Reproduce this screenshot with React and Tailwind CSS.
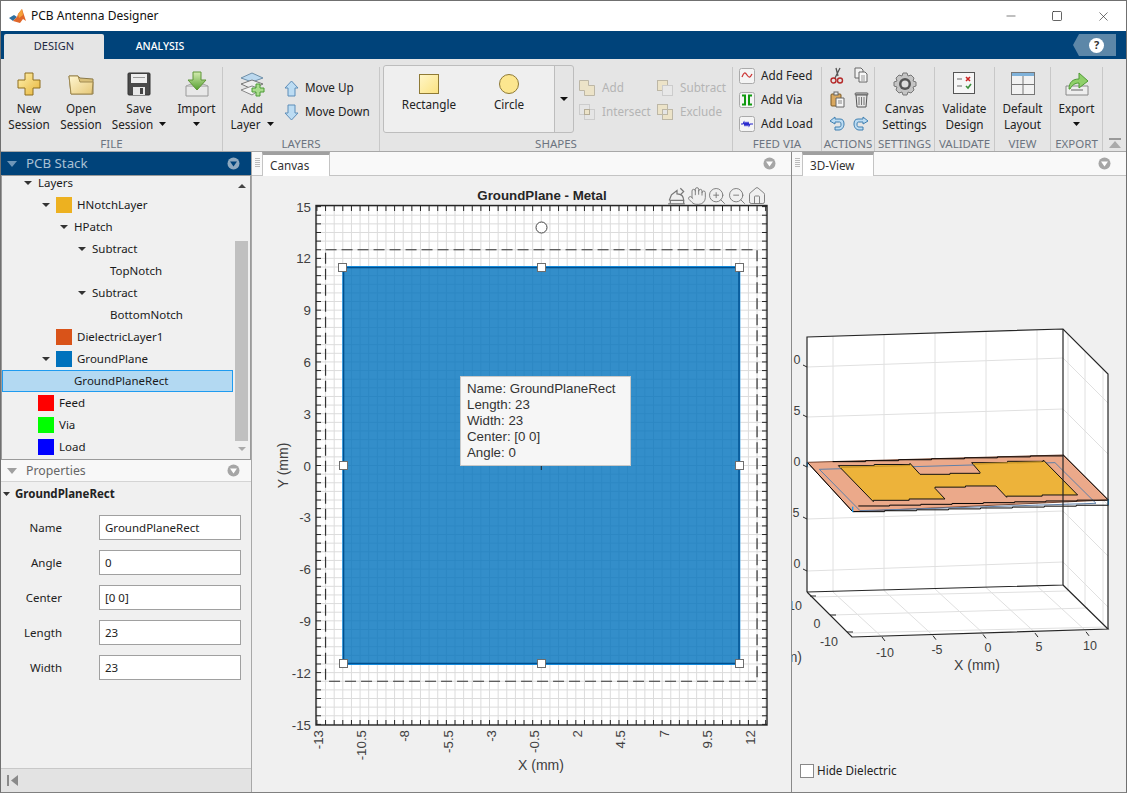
import React from "react";
import { Hand, ZoomIn, ZoomOut, Home, Minus, Square, X } from "lucide-react";

const Tri = ({ c = "#333", w = 9, h = 5, up = false }) => (
  <svg width={w} height={h} viewBox="0 0 10 6" preserveAspectRatio="none" className="block shrink-0">
    <polygon points={up ? "0,6 10,6 5,0" : "0,0 10,0 5,6"} fill={c} />
  </svg>
);

const Ico = ({ s = 32, w, h, vb, children }) => (
  <svg width={w || s} height={h || s} viewBox={vb || `0 0 ${w || s} ${h || s}`} className="block shrink-0">{children}</svg>
);

const NewIcon = () => (
  <Ico s={26}>
    <defs><linearGradient id="g1" x1="0" y1="0" x2="1" y2="1"><stop offset="0" stopColor="#fff2b0" /><stop offset="1" stopColor="#e8b53a" /></linearGradient></defs>
    <path d="M9 2h8v7h7v8h-7v7H9v-7H2V9h7z" fill="url(#g1)" stroke="#8f6f1f" />
  </Ico>
);
const OpenIcon = () => (
  <Ico w={26} h={22}>
    <defs><linearGradient id="g2" x1="0" y1="0" x2="1" y2="1"><stop offset="0" stopColor="#fff6d0" /><stop offset="1" stopColor="#e6c878" /></linearGradient></defs>
    <path d="M1 3h9l2 2 13 1v15H3z" fill="#d9c07a" stroke="#8b7a4a" />
    <path d="M1 3l2 18h21l1-12H12l-2-6z" fill="url(#g2)" stroke="#a08a50" />
  </Ico>
);
const SaveIcon = () => (
  <Ico s={24}>
    <rect x="1" y="1" width="22" height="22" rx="1" fill="#4a4a4a" stroke="#333" />
    <rect x="4" y="2" width="16" height="9" fill="#eee" />
    <rect x="6" y="5" width="12" height="1" fill="#999" />
    <rect x="6" y="15" width="12" height="8" fill="#e8e8e8" />
    <rect x="13" y="16" width="3" height="6" fill="#444" />
  </Ico>
);
const ImportIcon = () => (
  <Ico w={24} h={26}>
    <defs><linearGradient id="g3" x1="0" y1="0" x2="0" y2="1"><stop offset="0" stopColor="#d5ecb0" /><stop offset="1" stopColor="#55a030" /></linearGradient></defs>
    <path d="M1 15h22v10H1z" fill="#e8e8e8" stroke="#999" />
    <path d="M1 15l5-2h12l5 2" fill="#ccc" stroke="#aaa" />
    <path d="M8 1h8v8h5L12 19 3 9h5z" fill="url(#g3)" stroke="#5f9638" />
  </Ico>
);
const AddLayerIcon = () => (
  <Ico w={26} h={26}>
    <path d="M2 7l11-5 11 5-11 4z" fill="#bcd9ef" stroke="#6f8fa8" />
    <path d="M2 13l11-4 11 4-11 5z" fill="#eee" stroke="#777" />
    <path d="M2 19l11-4 9 3-9 6z" fill="#f4f4f4" stroke="#888" />
    <path d="M17 13h4v4h4v4h-4v4h-4v-4h-4v-4h4z" fill="#a9dc8d" stroke="#4b9a35" />
  </Ico>
);
const Arrow = ({ up }) => (
  <Ico w={15} h={17}>
    <path d={up ? "M7.5 1L14 8h-3v8H4V8H1z" : "M7.5 16L14 9h-3V1H4v8H1z"} fill="#bcdcf3" stroke="#5d8db8" />
  </Ico>
);
const RectIcon = () => (
  <Ico s={20}>
    <defs><linearGradient id="g4" x1="0" y1="0" x2="1" y2="1"><stop offset="0" stopColor="#fff6c8" /><stop offset="1" stopColor="#fbe280" /></linearGradient></defs>
    <rect x=".5" y=".5" width="19" height="19" fill="url(#g4)" stroke="#8f7a35" />
  </Ico>
);
const CircleIcon = () => (
  <Ico s={20}>
    <circle cx="10" cy="10" r="9.5" fill="#fce68f" stroke="#8f7a35" />
  </Ico>
);
const BoolIcon = ({ kind }) => (
  <Ico s={17}>
    {kind === "add" && <path d="M.5.5h9v5h6v10h-10v-5h-5z" fill="#ece3c8" stroke="#bdb7a6" />}
    {kind === "sub" && <><rect x=".5" y=".5" width="10" height="10" fill="#ece3c8" stroke="#bdb7a6" /><rect x="5.5" y="5.5" width="10" height="10" fill="#e8e8e8" stroke="#ccc" /></>}
    {kind === "int" && <><rect x=".5" y=".5" width="10" height="10" fill="none" stroke="#ccc" /><rect x="5.5" y="5.5" width="10" height="10" fill="none" stroke="#ccc" /><rect x="5.5" y="5.5" width="5" height="5" fill="#ece3c8" stroke="#b5ad98" /></>}
    {kind === "exc" && <><rect x=".5" y=".5" width="10" height="10" fill="#ece3c8" stroke="#bdb7a6" /><rect x="5.5" y="5.5" width="10" height="10" fill="#ece3c8" stroke="#bdb7a6" /><rect x="5.5" y="5.5" width="5" height="5" fill="#e5e5e5" stroke="#bdb7a6" /></>}
  </Ico>
);
const FeedBox = ({ children }) => (
  <Ico s={16}>
    <rect x=".5" y=".5" width="15" height="15" rx="2" fill="#f4f4f4" stroke="#aaa" />
    {children}
  </Ico>
);
const Cut = () => (
  <Ico w={14} h={17}>
    <path d="M10 1L5 11M6 1l2 8" stroke="#555" strokeWidth="1.3" fill="none" />
    <circle cx="3.5" cy="13.5" r="2.5" fill="none" stroke="#b52a2a" strokeWidth="1.4" />
    <circle cx="10" cy="13.5" r="2.5" fill="none" stroke="#b52a2a" strokeWidth="1.4" />
  </Ico>
);
const Copy = () => (
  <Ico w={14} h={16}>
    <path d="M1 1h6l2 2v8H1z" fill="#f2f2f2" stroke="#666" />
    <path d="M5 5h6l2 2v8H5z" fill="#f8f8f8" stroke="#666" />
    <path d="M7 9h4M7 11h4M7 13h4" stroke="#999" />
  </Ico>
);
const Paste = () => (
  <Ico w={15} h={17}>
    <rect x="1" y="3" width="10" height="12" rx="1" fill="#d9a860" stroke="#7c5a25" />
    <rect x="4" y="1" width="4" height="3" fill="#eee" stroke="#666" />
    <path d="M6 7h8v9H6z" fill="#f6f6f6" stroke="#666" />
    <path d="M8 10h4M8 12h4" stroke="#888" />
  </Ico>
);
const Trash = () => (
  <Ico w={15} h={17}>
    <rect x="1" y="2" width="13" height="2" rx="1" fill="#ddd" stroke="#555" />
    <path d="M2 4l1 12h9l1-12z" fill="#e6e6e6" stroke="#555" />
    <path d="M5 6v8M7.5 6v8M10 6v8" stroke="#777" />
  </Ico>
);
const Undo = ({ flip }) => (
  <Ico w={16} h={15}>
    <g transform={flip ? "translate(16 0) scale(-1 1)" : undefined}>
      <path d="M1 5l5-4v2h5c3 0 4 2 4 5s-2 6-5 6H6v-3h4c2 0 2-1 2-3s-1-2-2-2H6v2z" fill="#bcdcf3" stroke="#3f7fb0" />
    </g>
  </Ico>
);
const Gear = () => (
  <Ico s={24}>
    <path d="M10 1h4l1 3 3-1 3 3-1 3 3 1v4l-3 1 1 3-3 3-3-1-1 3h-4l-1-3-3 1-3-3 1-3-3-1v-4l3-1-1-3 3-3 3 1z" fill="#c4c4c4" stroke="#777" />
    <circle cx="12" cy="12" r="6" fill="#555" />
    <circle cx="12" cy="12" r="3.5" fill="#ddd" />
  </Ico>
);
const ValidateIcon = () => (
  <Ico s={23}>
    <rect x=".5" y=".5" width="21" height="21" fill="#f6f6f6" stroke="#555" />
    <path d="M4 7h5M4 14h5" stroke="#999" strokeWidth="1.5" />
    <path d="M13 5l4 4M17 5l-4 4" stroke="#cc2222" strokeWidth="1.6" />
    <path d="M13 14l2 2 3-4" stroke="#3c8f3c" strokeWidth="1.6" fill="none" />
  </Ico>
);
const LayoutIcon = () => (
  <Ico s={24}>
    <rect x=".5" y=".5" width="23" height="22" fill="#f2f2f2" stroke="#777" />
    <rect x="1" y="1" width="22" height="3" fill="#7fb2da" />
    <path d="M1 12.5h22M12 4v18" stroke="#777" />
  </Ico>
);
const ExportIcon = () => (
  <Ico w={24} h={24}>
    <path d="M1 14h22v9H1z" fill="#eee" stroke="#888" />
    <path d="M6 18h12" stroke="#aaa" strokeWidth="2" />
    <path d="M4 17c0-7 4-10 10-10V1l9 8-9 7v-5c-4 0-7 2-9 6z" fill="#8fd06a" stroke="#4f9a35" />
  </Ico>
);

const TwoLine = ({ a, b, drop }) => (
  <div className="flex flex-col items-center text-[11.7px] leading-[16px] text-[#222] whitespace-nowrap">
    <span>{a}</span>
    <span className="flex items-center gap-[6px] h-[16px]">
      {b}
      {drop && <Tri c="#111" w={7} h={4} />}
    </span>
  </div>
);

const Big = ({ w, icon, a, b, drop }) => (
  <div className="flex flex-col items-center shrink-0" style={{ width: w }}>
    <div className="h-[33px] flex items-center justify-center">{icon}</div>
    <TwoLine a={a} b={b} drop={drop} />
  </div>
);

const Section = ({ w, label, children, noBorder }) => (
  <div className={`flex flex-col shrink-0 h-full ${noBorder ? "" : "border-r border-[#c8c8c8]"}`} style={{ width: w }}>
    <div className="h-[69px] flex shrink-0">{children}</div>
    <div className="h-[15px] shrink-0 text-center text-[11.5px] leading-[15px] text-[#6c7480] whitespace-nowrap overflow-hidden">{label}</div>
  </div>
);

const Small = ({ icon, label, disabled, gap = "gap-[6px]" }) => (
  <div className={`flex items-center ${gap} h-[24px] text-[11.7px] whitespace-nowrap ${disabled ? "text-[#b4b4b4]" : "text-[#222]"}`}>
    {icon}
    <span>{label}</span>
  </div>
);

const Toolstrip = () => (
  <div className="h-[93px] shrink-0 bg-[#e5e5e5] flex pt-[8px] border-b border-[#a8a8a8]">
    <div className="flex h-[84px]">
      <Section w={222} label="FILE">
        <div className="w-[3px]" />
        <Big w={52} icon={<NewIcon />} a="New" b="Session" />
        <Big w={52} icon={<OpenIcon />} a="Open" b="Session" />
        <Big w={64} icon={<SaveIcon />} a="Save" b="Session" drop />
        <Big w={51} icon={<ImportIcon />} a="Import" b="" drop />
      </Section>
      <Section w={157} label="LAYERS">
        <Big w={58} icon={<AddLayerIcon />} a="Add" b="Layer" drop />
        <div className="flex flex-col pt-[9px] pl-[3px]">
          <Small icon={<Arrow up />} label="Move Up" />
          <Small icon={<Arrow />} label="Move Down" />
        </div>
      </Section>
      <Section w={353} label="SHAPES">
        <div className="ml-[3px] w-[191px] h-[68px] -mt-[2px] border border-[#bdbdbd] rounded-[3px] flex shrink-0">
          <div className="w-[171px] bg-[#efefef] border-r border-[#bdbdbd] flex pt-[8px] rounded-l-[3px]">
            <div className="w-[90px] flex flex-col items-center gap-[2px] text-[11.7px] text-[#222]">
              <RectIcon />
              <span>Rectangle</span>
            </div>
            <div className="w-[70px] flex flex-col items-center gap-[2px] text-[11.7px] text-[#222]">
              <CircleIcon />
              <span>Circle</span>
            </div>
          </div>
          <div className="flex-1 flex items-center justify-center"><Tri c="#111" w={8} h={4} /></div>
        </div>
        <div className="flex flex-col pt-[9px] pl-[5px] w-[83px] shrink-0">
          <Small icon={<BoolIcon kind="add" />} label="Add" disabled />
          <Small icon={<BoolIcon kind="int" />} label="Intersect" disabled />
        </div>
        <div className="flex flex-col pt-[9px]">
          <Small icon={<BoolIcon kind="sub" />} label="Subtract" disabled />
          <Small icon={<BoolIcon kind="exc" />} label="Exclude" disabled />
        </div>
      </Section>
      <Section w={89} label="FEED VIA">
        <div className="flex flex-col pl-[6px] -mt-[3px]">
          <Small icon={<FeedBox><path d="M3 9c2-5 3-5 5-2s3 3 5-1" stroke="#cc3333" fill="none" strokeWidth="1.3" /></FeedBox>} label="Add Feed" />
          <Small icon={<FeedBox><path d="M3 3.5h3v9H3M13 3.5h-3v9h3" stroke="#109a10" fill="none" strokeWidth="2" /></FeedBox>} label="Add Via" />
          <Small icon={<FeedBox><path d="M2 8h2l1-2 1 4 1-4 1 4 1-4 1 4 1-2h3" stroke="#2222cc" fill="none" strokeWidth="1.1" /></FeedBox>} label="Add Load" />
        </div>
      </Section>
      <Section w={53} label="ACTIONS">
        <div className="grid grid-cols-[24px_24px] auto-rows-[24px] pl-[3px] -mt-[4px] items-center justify-items-center">
          <Cut /><Copy /><Paste /><Trash /><Undo /><Undo flip />
        </div>
      </Section>
      <Section w={60} label="SETTINGS">
        <Big w={59} icon={<Gear />} a="Canvas" b="Settings" />
      </Section>
      <Section w={60} label="VALIDATE">
        <Big w={59} icon={<ValidateIcon />} a="Validate" b="Design" />
      </Section>
      <Section w={56} label="VIEW">
        <Big w={55} icon={<LayoutIcon />} a="Default" b="Layout" />
      </Section>
      <Section w={52} label="EXPORT">
        <Big w={51} icon={<ExportIcon />} a="Export" b="" drop />
      </Section>
    </div>
    <div className="flex-1 flex items-end justify-center pb-[2px]">
      <svg width="12" height="11" viewBox="0 0 12 11" className="block">
        <rect x="0" y="0" width="12" height="2" fill="#999" />
        <polygon points="6,3 12,10 0,10" fill="#aaa" />
      </svg>
    </div>
  </div>
);

const Grip = () => (
  <div className="w-[10px] flex flex-col gap-[1px] items-center pt-[6px] shrink-0">
    {[0, 1, 2, 3, 4].map((i) => <div key={i} className="w-[5px] h-[1px] bg-[#bbb]" />)}
  </div>
);

const Menu = ({ c = "#a6a6a6", t = "#fff" }) => (
  <svg width="13" height="13" viewBox="0 0 13 13" className="block shrink-0">
    <circle cx="6.5" cy="6.5" r="6" fill={c} />
    <polygon points="3,4.5 10,4.5 6.5,9.5" fill={t} />
  </svg>
);

const rows = [
  { d: 0, a: 1, t: "Layers" },
  { d: 1, a: 1, s: "#edb120", t: "HNotchLayer" },
  { d: 2, a: 1, t: "HPatch" },
  { d: 3, a: 1, t: "Subtract" },
  { d: 4, t: "TopNotch" },
  { d: 3, a: 1, t: "Subtract" },
  { d: 4, t: "BottomNotch" },
  { d: 1, s: "#d95319", t: "DielectricLayer1" },
  { d: 1, a: 1, s: "#0072bd", t: "GroundPlane" },
  { d: 2, t: "GroundPlaneRect", sel: 1 },
  { d: 0, s: "#ff0000", t: "Feed" },
  { d: 0, s: "#00ff00", t: "Via" },
  { d: 0, s: "#0000ff", t: "Load" },
];

const Tree = () => (
  <div className="h-[285px] shrink-0 border border-[#9a9a9a] bg-[#f0f0f0] flex overflow-hidden">
    <div className="w-[232px] -mt-[4px] shrink-0">
      {rows.map((r, i) => (
        <div
          key={i}
          className={`h-[22px] flex items-center whitespace-nowrap text-[11.5px] text-[#1a1a1a] ${r.sel ? "bg-[#b3d9f2] border border-[#1e9bf0] w-[231px]" : ""}`}
          style={{ paddingLeft: (r.sel ? 17 : 18) + 18 * r.d }}
        >
          <div className="w-[18px] flex justify-center shrink-0 pr-[2px]">{r.a ? <Tri c="#333" w={8} h={4} /> : null}</div>
          {r.s && <div className="w-[16px] h-[16px] mr-[5px] shrink-0" style={{ background: r.s }} />}
          <span>{r.t}</span>
        </div>
      ))}
    </div>
    <div className="w-[13px] ml-[1px] flex flex-col items-center shrink-0">
      <div className="mt-[8px]"><Tri c="#444" w={8} h={4} up /></div>
      <div className="w-[13px] h-[200px] bg-[#c0c0c0] mt-[53px]" />
      <div className="mt-[6px]"><Tri c="#aaa" w={8} h={4} /></div>
    </div>
  </div>
);

const props = [["Name", "GroundPlaneRect"], ["Angle", "0"], ["Center", "[0 0]"], ["Length", "23"], ["Width", "23"]];

const LeftPanel = () => (
  <div className="w-[251px] shrink-0 flex flex-col border-r border-[#a8a8a8] font-['Noto_Sans',sans-serif]">
    <div className="h-[23px] bg-[#00437a] flex items-center pl-[6px] pr-[11px] shrink-0">
      <Tri c="#6e96b8" w={10} h={6} />
      <span className="ml-[9px] text-[13.3px] text-[#a9c0d4] flex-1">PCB Stack</span>
      <Menu c="#8fa9bf" t="#00437a" />
    </div>
    <Tree />
    <div className="h-[22px] bg-[#f8f8f8] flex items-center pl-[6px] pr-[11px] border-b border-[#d4d4d4] shrink-0">
      <Tri c="#a0a0a0" w={10} h={6} />
      <span className="ml-[9px] pt-[2px] text-[12.3px] text-[#666] flex-1">Properties</span>
      <Menu />
    </div>
    <div className="flex-1 bg-[#f0f0f0] flex flex-col min-h-0">
      <div className="h-[23px] flex items-center pl-[2px] text-[11.5px] font-bold text-[#222]">
        <Tri c="#333" w={7} h={4} />
        <span className="ml-[5px]">GroundPlaneRect</span>
      </div>
      <div className="flex flex-col gap-[10px] pt-[10px]">
        {props.map(([l, v]) => (
          <div key={l} className="flex items-center h-[25px]">
            <div className="w-[61px] text-right text-[11.5px] text-[#222]">{l}</div>
            <div className="ml-[37px] w-[142px] h-[25px] bg-white border border-[#a0a0a0] flex items-center pl-[5px] text-[11.5px] text-[#222]">{v}</div>
          </div>
        ))}
      </div>
      <div className="flex-1" />
      <div className="h-[24px] bg-[#e3e3e3] border-t border-[#c8c8c8] flex items-center pl-[6px]">
        <svg width="11" height="11" viewBox="0 0 11 11" className="block">
          <rect x="0" y="0" width="2" height="11" fill="#8a8a8a" />
          <polygon points="11,0 11,11 4,5.5" fill="#8a8a8a" />
        </svg>
      </div>
    </div>
  </div>
);

const TabHead = ({ w, label, pr }) => (
  <div className="h-[24px] bg-[#f9f9f9] border-b border-[#c4c4c4] flex items-stretch shrink-0 font-['Noto_Sans',sans-serif]" style={{ paddingRight: pr }}>
    <Grip />
    <div className="bg-white border-x border-[#c4c4c4] border-t-[3px] border-t-[#a0a0a0] -mb-[1px] flex items-center pl-[7px] text-[11.7px] text-[#333]" style={{ width: w }}>{label}</div>
    <div className="flex-1 flex items-center justify-end"><Menu /></div>
  </div>
);

const X0 = 541.3, Y0 = 465.5, K = 17.26;
const px = (v) => X0 + v * K;
const py = (v) => Y0 - v * K;
const half = Array.from({ length: 53 }, (_, i) => -13 + i * 0.5);
const halfY = Array.from({ length: 61 }, (_, i) => -15 + i * 0.5);
const xLabels = ["-13", "-10.5", "-8", "-5.5", "-3", "-0.5", "2", "4.5", "7", "9.5", "12"];
const yLabels = ["15", "12", "9", "6", "3", "0", "-3", "-6", "-9", "-12", "-15"];

const Handle = ({ x, y }) => <rect x={x - 4} y={y - 4} width="8" height="8" fill="#fff" stroke="#6e6e6e" />;

const Plot = () => (
  <svg width="539" height="617" viewBox="252 176 539 617" className="block" fontFamily="'Liberation Sans',Arial,sans-serif">
    <rect x="316" y="206" width="451" height="519" fill="#fff" />
    {half.map((v) => <line key={v} x1={px(v)} x2={px(v)} y1="206" y2="725" stroke="#dcdcdc" />)}
    {halfY.map((v) => <line key={v} y1={py(v)} y2={py(v)} x1="316" x2="767" stroke="#dcdcdc" />)}
    <rect x={px(-11.5)} y={py(11.5)} width={K * 23} height={K * 23} fill="#0072bd" fillOpacity=".8" />
    <rect x={px(-11.5)} y={py(11.5) - 0.5} width={K * 23} height={K * 23 + 1} fill="none" stroke="#1b9cf2" strokeWidth="1" />
    <rect x={px(-11.5) + 0.75} y={py(11.5) + 0.5} width={K * 23 - 1.5} height={K * 23 - 1} fill="none" stroke="#00508f" strokeWidth="1.5" />
    <rect x={px(-12.5)} y={py(12.5)} width={K * 25} height={K * 25} fill="none" stroke="#333" strokeWidth="1.2" strokeDasharray="11 5" />
    {half.map((v) => (
      <g key={v} stroke="#262626">
        <line x1={px(v)} x2={px(v)} y1="206" y2="211" />
        <line x1={px(v)} x2={px(v)} y1="725" y2="720" />
      </g>
    ))}
    {halfY.map((v) => (
      <g key={v} stroke="#262626">
        <line y1={py(v)} y2={py(v)} x1="316" x2="321" />
        <line y1={py(v)} y2={py(v)} x1="767" x2="762" />
      </g>
    ))}
    <rect x="316" y="205.5" width="451" height="519.5" fill="none" stroke="#262626" strokeWidth="1.4" />
    {yLabels.map((l, i) => (
      <text key={l} x="311" y={211.5 + i * 51.8} textAnchor="end" fontSize="13.3" fill="#404040">{l}</text>
    ))}
    {xLabels.map((l, i) => (
      <text key={l} transform={`translate(${323 + i * 43.2} 730) rotate(-90)`} textAnchor="end" fontSize="13.3" fill="#404040">{l}</text>
    ))}
    <text x="541" y="770" textAnchor="middle" fontSize="14" fill="#404040">X (mm)</text>
    <text transform="translate(288 465.5) rotate(-90)" textAnchor="middle" fontSize="14" fill="#404040">Y (mm)</text>
    <text x="542" y="200" textAnchor="middle" fontSize="13.3" fontWeight="700" fill="#262626">GroundPlane - Metal</text>
    <line x1={px(0)} x2={px(0)} y1="462" y2="470" stroke="#222" />
    <circle cx="541.5" cy="227.5" r="5.5" fill="#fff" stroke="#444" />
    {[[342.5, 267.5], [541.5, 267.5], [739.5, 267.5], [343.5, 465.5], [739.5, 465.5], [343.5, 663.5], [541.5, 663.5], [739.5, 663.5]].map(([x, y], i) => <Handle key={i} x={x} y={y} />)}
  </svg>
);

// The model's near-horizontal edges render as staircases in the reference.
const stair = (pts, closed) => {
  const out = [];
  const list = closed ? [...pts, pts[0]] : pts;
  for (let i = 0; i < list.length - 1; i++) {
    const [x0, y0] = list[i], [x1, y1] = list[i + 1];
    out.push([x0, y0]);
    const dx = x1 - x0, dy = y1 - y0;
    if (Math.abs(dx) > 3 * Math.abs(dy) && Math.abs(dx) > 120) {
      const n = Math.round(Math.abs(dx) / 98);
      for (let k = 1; k < n; k++) {
        const x = x0 + (dx * k) / n;
        out.push([x, y0 + (dy * (k - 1)) / n], [x, y0 + (dy * k) / n]);
      }
      out.push([x1, y0 + (dy * (n - 1)) / n]);
    }
  }
  if (!closed) out.push(list[list.length - 1]);
  return out.map((p) => p.join(",")).join(" ");
};

const P3 = ({ pts, ...r }) => <polyline points={pts} fill="none" {...r} />;

const View3D = () => (
  <svg width="335" height="400" viewBox="792 300 335 400" className="block shrink-0" fontFamily="'Liberation Sans',Arial,sans-serif">
    <polygon points="807,337 1063,329 1108,374 1108,629 852,637 807,592" fill="#fff" />
    <g stroke="#e0e0e0" strokeWidth="1">
      {[833, 884, 935, 986, 1037].map((x, i) => (
        <g key={x}>
          <line x1={x} x2={x} y1={336 - i * 1.5} y2={592 - i * 1.5} />
          <line x1={x} y1={592 - i * 1.5} x2={x + 49} y2={637 - i * 1.5} />
        </g>
      ))}
      <line x1="1068" x2="1068" y1="334" y2="590" />
      <line x1="1085" x2="1085" y1="351" y2="607" />
      <line x1="1103" x2="1103" y1="369" y2="625" />
      {[[367, 358], [417, 409], [467, 460], [519, 511], [571, 562]].map(([a, b]) => (
        <g key={a}>
          <line x1="807" y1={a} x2="1063" y2={b} />
          <line x1="1063" y1={b} x2="1108" y2={b + 45} />
        </g>
      ))}
      <line x1="813" y1="597" x2="1068" y2="591" />
      <line x1="832" y1="615" x2="1088" y2="608" />
      <line x1="850" y1="633" x2="1106" y2="627" />
    </g>
    <g transform="translate(790 320) scale(.3333)">
      <polygon points="52,427 820,405 955,540 188,575" fill="#eba98a" />
      <polygon points="52,427 820,405 955,540 188,575" fill="none" stroke="#5b2a16" strokeWidth="2.5" />
      <polygon points="88,448 795,428 918,550 210,572" fill="none" stroke="#5f7fa8" strokeWidth="3" />
      <polygon
        points={stair([[145, 437], [360, 430], [390, 463], [570, 457], [545, 428], [760, 420], [863, 525], [650, 532], [618, 498], [435, 505], [465, 537], [250, 545]], true)}
        fill="#edb33a"
        stroke="#111"
        strokeWidth="3"
      />
      <P3 pts="150,442 360,436" stroke="#c8962a" strokeWidth="4" />
      <P3 pts="550,432 755,426" stroke="#c8962a" strokeWidth="4" />
      <P3 pts={stair([[128, 425], [820, 405]])} stroke="#000" strokeWidth="3" />
      <P3 pts="52,427 188,575" stroke="#000" strokeWidth="3" />
      <P3 pts="820,405 955,540" stroke="#000" strokeWidth="3" />
      <P3 pts={stair([[188, 575], [955, 553]])} stroke="#000" strokeWidth="3" />
      <P3 pts={stair([[205, 558], [955, 538]])} stroke="#000" strokeWidth="3" />
      <P3 pts="188,560 188,576" stroke="#1b9cf2" strokeWidth="4" />
      <P3 pts="955,538 955,555" stroke="#1b9cf2" strokeWidth="4" />
      <P3 pts="52,427 52,440" stroke="#1b9cf2" strokeWidth="4" />
    </g>
    <g stroke="#262626" fill="none" strokeWidth="1.2">
      <polyline points="807,592 807,337 1063,329 1108,374 1108,629" />
      <polyline points="1063,329 1063,585 807,592" />
      <polyline points="1063,585 1108,629 852,637 807,592" />
    </g>
    <g stroke="#262626" strokeWidth="1">
      {[367, 417, 467, 519, 571].map((y) => <line key={y} x1="803" y1={y - 2} x2="807" y2={y} />)}
      {[[810, 596], [830, 615], [847, 632]].map(([x, y]) => <line key={x} x1={x} y1={y} x2={x + 6} y2={y} />)}
      {[882, 933, 983, 1035, 1086].map((x, i) => <line key={x} x1={x} y1={637 - i * 1.3} x2={x + 3} y2={641 - i * 1.3} />)}
    </g>
    <g fontSize="12.5" fill="#404040" textAnchor="middle">
      <text x="797" y="364">0</text>
      <text x="797" y="415">5</text>
      <text x="797" y="466">0</text>
      <text x="796" y="517">5</text>
      <text x="797" y="568">0</text>
      <text x="795" y="610">10</text>
      <text x="817" y="628">0</text>
      <text x="829" y="646">-10</text>
      <text x="885" y="657">-10</text>
      <text x="937" y="654">-5</text>
      <text x="988" y="652">0</text>
      <text x="1039" y="651">5</text>
      <text x="1090" y="650">10</text>
      <text x="977" y="670" fontSize="14">X (mm)</text>
      <text x="802" y="662" fontSize="14" textAnchor="end">Y (mm)</text>
    </g>
  </svg>
);

const IconEdit = () => (
  <svg width="20" height="20" viewBox="0 0 18 18" className="block" fill="none" stroke="#777" strokeWidth="1.1">
    <path d="M1 16h15M2 13l2-5 5-4v3c4 0 6 2 6 6M12 2l3 3-3 3" />
    <path d="M3 16v-3h12v3" />
  </svg>
);

export default function App() {
  return (
    <div className="w-[1127px] h-[793px] flex flex-col overflow-hidden bg-[#f0f0f0] border-x border-t border-[#707070] border-b border-b-[#808080] font-['Noto_Sans',sans-serif]">
      <div className="h-[30px] bg-white flex items-center pl-[8px] shrink-0">
        <svg width="17" height="15" viewBox="0 0 17 15" className="block">
          <polygon points="0,9 5,6 8,8 4,12" fill="#2f6f9f" />
          <polygon points="4,12 8,8 9,5 13,0 17,12 14,10 11,14" fill="#e0672a" />
          <polygon points="9,5 13,0 14,6 10,9" fill="#f5a13a" />
        </svg>
        <span className="ml-[5px] text-[12px] text-[#111]">PCB Antenna Designer</span>
        <div className="flex-1" />
        <div className="flex items-center text-[#222]">
          <div className="w-[46px] flex justify-center"><Minus size={14} strokeWidth={1} /></div>
          <div className="w-[46px] flex justify-center"><Square size={12} strokeWidth={1.4} /></div>
          <div className="w-[46px] flex justify-center"><X size={15} strokeWidth={1} /></div>
        </div>
      </div>
      <div className="h-[28px] bg-[#00437a] flex items-end pl-[3px] shrink-0">
        <div className="w-[100px] h-[25px] bg-[#e5e5e5] rounded-t-[2px] flex items-center justify-center text-[11px] text-[#1d2a44]">DESIGN</div>
        <div className="w-[112px] h-[25px] flex items-center justify-center text-[10.5px] text-white font-medium">ANALYSIS</div>
        <div className="flex-1" />
        <div className="w-[43px] h-[22px] mb-[3px] mr-[10px] bg-[#5d87a8] flex items-center justify-center [clip-path:polygon(14%_0,100%_0,100%_100%,14%_100%,0_50%)]">
          <div className="ml-[4px] w-[15px] h-[15px] rounded-full bg-white text-[#333] text-[11px] font-bold flex items-center justify-center">?</div>
        </div>
      </div>
      <Toolstrip />
      <div className="flex-1 flex min-h-0">
        <LeftPanel />
        <div className="w-[540px] shrink-0 flex flex-col border-r border-[#8a8a8a] relative min-h-0">
          <TabHead w={68} label="Canvas" pr={15} />
          <div className="flex-1 min-h-0 overflow-hidden"><Plot /></div>
          <div className="absolute left-[415px] top-[34px] flex items-center text-[#777]">
            <IconEdit />
            <Hand size={20} strokeWidth={1.1} />
            <ZoomIn size={20} strokeWidth={1.1} />
            <ZoomOut size={20} strokeWidth={1.1} />
            <Home size={20} strokeWidth={1.1} />
          </div>
          <div className="absolute left-[208px] top-[224px] w-[171px] h-[90px] bg-[#f6f6f6] border border-[#c8c8c8] px-[6px] py-[4px] text-[13.3px] leading-[16px] text-[#333] font-['Liberation_Sans',Arial,sans-serif] whitespace-nowrap">
            <div>Name: GroundPlaneRect</div>
            <div>Length: 23</div>
            <div>Width: 23</div>
            <div>Center: [0 0]</div>
            <div>Angle: 0</div>
          </div>
        </div>
        <div className="flex-1 flex flex-col min-h-0 min-w-0">
          <TabHead w={72} label="3D-View" pr={15} />
          <div className="flex-1 min-h-0 overflow-hidden flex flex-col">
            <div className="h-[124px] shrink-0" />
            <View3D />
            <div className="flex-1" />
            <div className="flex items-center h-[16px] pl-[8px] mb-[13px] text-[11.7px] text-[#222] shrink-0">
              <div className="w-[14px] h-[14px] bg-white border border-[#888]" />
              <span className="ml-[3px]">Hide Dielectric</span>
            </div>
          </div>
        </div>
      </div>
    </div>
  );
}
